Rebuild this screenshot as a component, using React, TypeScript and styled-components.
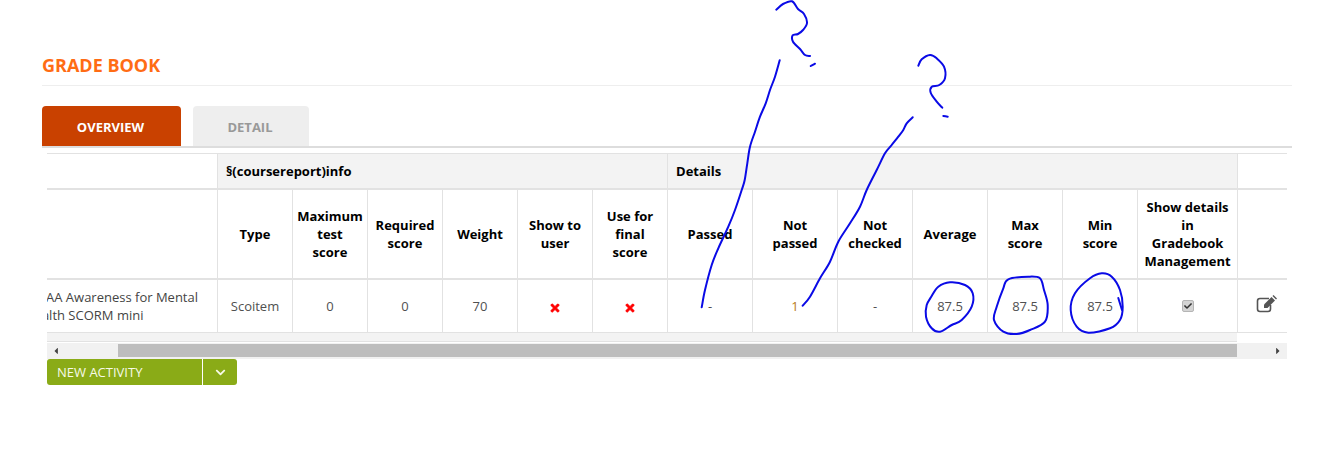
import React from "react";
import styled, { createGlobalStyle } from "styled-components";
import { FaTimes, FaCheck, FaChevronDown, FaCaretLeft, FaCaretRight } from "react-icons/fa";

const Global = createGlobalStyle`
  html, body { margin: 0; padding: 0; background: #fff; }
  body { font-family: "Open Sans", "Liberation Sans", sans-serif; color: #333; }
`;

const Page = styled.div`
  position: relative;
  width: 1317px;
  height: 455px;
  overflow: hidden;
  padding: 55px 25px 0 42px;
  box-sizing: border-box;
`;
const Title = styled.h1`
  margin: 0;
  height: 30px;
  line-height: 21px;
  font-size: 18px;
  font-weight: 700;
  color: #ff6c14;
  border-bottom: 1px solid #eee;
`;
const Tabs = styled.div`
  display: flex;
  gap: 12px;
  margin-top: 20px;
  border-bottom: 2px solid #ddd;
`;
const Tab = styled.div<{ $active?: boolean }>`
  height: 40px;
  line-height: 42px;
  width: ${(p) => (p.$active ? 139 : 116)}px;
  padding-right: 2px;
  box-sizing: border-box;
  text-align: center;
  font-size: 13px;
  font-weight: 700;
  border-radius: 4px 4px 0 0;
  background: ${(p) => (p.$active ? "#c94100" : "#eee")};
  color: ${(p) => (p.$active ? "#fff" : "#999")};
`;
const Scroller = styled.div`
  width: 1240px;
  margin: 5px 0 0 5px;
  overflow: hidden;
`;
const Table = styled.table`
  width: 1240px;
  table-layout: fixed;
  border-collapse: separate;
  border-spacing: 0;
  font-size: 13px;
  line-height: 18px;
`;
const Th = styled.th<{ $band?: boolean; $left?: boolean; $rule?: boolean }>`
  box-sizing: border-box;
  padding: 0;
  font-weight: 700;
  color: #000;
  text-align: ${(p) => (p.$left ? "left" : "center")};
  background: ${(p) => (p.$band ? "#f3f3f3" : "#fff")};
  border-top: 1px solid #e2e2e2;
  border-left: ${(p) => (p.$rule ? "1px solid #e2e2e2" : "0")};
  padding-left: ${(p) => (p.$left ? "8px" : "0")};
  height: 35px;
`;
const HeadCell = styled.th<{ $edge?: boolean }>`
  box-sizing: border-box;
  height: 92px;
  padding: 0;
  font-weight: 700;
  color: #000;
  text-align: center;
  white-space: pre-line;
  border-top: 2px solid #e2e2e2;
  border-bottom: 2px solid #e2e2e2;
  border-left: ${(p) => (p.$edge ? "0" : "1px solid #e2e2e2")};
`;
const Cell = styled.td<{ $edge?: boolean; $tint?: string }>`
  box-sizing: border-box;
  height: 53px;
  padding: 0;
  text-align: center;
  color: ${(p) => p.$tint || "#505050"};
  border-bottom: 1px solid #e2e2e2;
  border-left: ${(p) => (p.$edge ? "0" : "1px solid #e2e2e2")};
`;
const ClippedName = styled.div`
  width: 190px;
  margin-left: -22px;
  text-align: left;
  white-space: nowrap;
  color: #444;
`;
const Footer = styled.div`
  height: 8px;
  width: 1190px;
  background: #f3f3f3;
  border-bottom: 1px solid #e2e2e2;
`;
const ScrollBar = styled.div`
  display: flex;
  align-items: center;
  width: 1240px;
  height: 16px;
  padding: 1px 0 2px;
  box-sizing: border-box;
  margin: 1px 0 0 5px;
  background: #f1f1f1;
  color: #444;
  font-size: 10px;
`;
const Arrow = styled.span`
  width: 71px;
  padding-left: 4px;
  box-sizing: border-box;
  display: flex;
`;
const ArrowEnd = styled.span`
  margin-left: auto;
  width: 50px;
  padding-right: 4px;
  box-sizing: border-box;
  display: flex;
  justify-content: flex-end;
`;
const Thumb = styled.div`
  width: 1119px;
  height: 13px;
  background: #bdbdbd;
`;
const Split = styled.div`
  display: flex;
  width: 190px;
  height: 26px;
  margin-left: 5px;
  background: #8aab17;
  border-radius: 3px;
  color: #f7fae8;
  font-size: 13px;
  line-height: 26px;
`;
const SplitLabel = styled.div`
  width: 156px;
  padding-left: 10px;
  box-sizing: border-box;
  border-right: 1px solid #fff;
`;
const SplitCaret = styled.div`
  flex: 1;
  display: flex;
  align-items: center;
  justify-content: center;
  font-size: 11px;
`;
const Red = styled.span`
  color: #f00;
  font-size: 12px;
  display: inline-flex;
  vertical-align: middle;
  svg { stroke: currentColor; stroke-width: 30px; }
`;
const Box = styled.span`
  display: inline-flex;
  align-items: center;
  justify-content: center;
  width: 12px;
  height: 12px;
  background: #d4d4d4;
  border: 1px solid #b5b5b5;
  border-radius: 2px;
  box-sizing: border-box;
  color: #333;
  font-size: 8px;
  position: relative;
  top: -1px;
`;
const EditGlyph = styled.svg`
  display: block;
  margin: -4px 0 0 18px;
  color: #555;
`;
const Ink = styled.svg`
  position: absolute;
  left: 0;
  top: 0;
  pointer-events: none;
`;
const InkLine = styled.path`
  fill: none;
  stroke: #0a0ae6;
  stroke-width: 2px;
  stroke-linecap: round;
  stroke-linejoin: round;
`;

const widths = [170, 75, 75, 75, 75, 75, 75, 85, 85, 75, 75, 75, 75, 100, 50];
const heads = [
  "Type", "Maximum\ntest\nscore", "Required\nscore", "Weight", "Show to\nuser", "Use for\nfinal\nscore",
  "Passed", "Not\npassed", "Not\nchecked", "Average", "Max\nscore", "Min\nscore", "Show details\nin\nGradebook\nManagement",
];

type Pt = [number, number];
const smooth = (p: Pt[], closed = false): string => {
  const at = (i: number): Pt =>
    closed ? p[(i + p.length) % p.length] : p[Math.max(0, Math.min(p.length - 1, i))];
  let d = `M${p[0][0]} ${p[0][1]}`;
  const n = closed ? p.length : p.length - 1;
  for (let i = 0; i < n; i++) {
    const [a, b, c, e] = [at(i - 1), at(i), at(i + 1), at(i + 2)];
    d += `C${(b[0] + (c[0] - a[0]) / 6).toFixed(1)} ${(b[1] + (c[1] - a[1]) / 6).toFixed(1)} ${(c[0] - (e[0] - b[0]) / 6).toFixed(1)} ${(c[1] - (e[1] - b[1]) / 6).toFixed(1)} ${c[0]} ${c[1]}`;
  }
  return d;
};

const strokes: string[] = [
  smooth([[776.3,9.7],[783,4],[792,1.3],[798,9],[804,14],[807,23],[803,30],[798,34],[792.7,35.3],[793,41.7],[800,49],[805,55],[810,56]]),
  smooth([[810.7,66],[815,63.7]]),
  smooth([[779.7,60.3],[775,76.7],[770,90],[765.7,103.3],[760,116.7],[755,131.7],[750,146.7],[747.3,163.3],[744.7,180],[741.7,190],[735,210],[728.3,226.7],[718.3,248.3],[711.7,265],[705,290],[701.7,307.3]]),
  smooth([[918.3,65.7],[921.7,59.3],[930,55],[936.7,58.3],[944,66.7],[945,78.3],[939.3,85],[931.7,86.7],[930.7,92.7],[936.7,101.7],[942.3,107.7]]),
  smooth([[943.3,116],[947.7,116.7]]),
  smooth([[912.7,117.3],[906.7,123.3],[903.3,130],[898.3,136.7],[891.7,145],[885,153.3],[876.7,170],[866.7,190],[860,206.7],[850,223.3],[838.3,241.7],[830,261.7],[820,278.3],[810,296.7],[802.7,305.7]]),
  smooth([[931.7,296],[938.3,286.7],[950,282.3],[965,285],[972.7,293.3],[971.7,306.7],[961.7,320],[951.7,325],[940,331.7],[931.7,328.3],[926,316.7],[926.7,305]], true),
  smooth([[1003.3,288.3],[1008.3,279.3],[1028.3,276.7],[1040,278.3],[1044,290],[1047.7,305],[1045,321.7],[1030,330],[1016.7,334],[1003.3,331.7],[994,320],[996.7,306.7]], true),
  smooth([[1101.7,273.3],[1111.7,276.7],[1120,290],[1122.7,306.7],[1120,320],[1110,328.3],[1088.3,332.7],[1076.7,326.7],[1070.7,310],[1075,293.3],[1090,278.3]], true),
  smooth([[1118.3,298],[1122,310]]),
];

const Edit = () => (
  <EditGlyph width="22" height="18" viewBox="0 0 22 18">
    <path
      d="M13 3.5H4a2.5 2.5 0 0 0-2.5 2.5v8A2.5 2.5 0 0 0 4 16.5h8a2.5 2.5 0 0 0 2.5-2.5v-4"
      fill="none"
      stroke="currentColor"
      strokeWidth="1.6"
    />
    <path d="M8 9.5 15.5 2l3.5 3.5-7.5 7.5H8z" fill="currentColor" />
    <path d="M16.5 1l1-1 3.5 3.5-1 1z" fill="currentColor" />
  </EditGlyph>
);

export default function App() {
  return (
    <Page>
      <Global />
      <Title>GRADE BOOK</Title>
      <Tabs>
        <Tab $active>OVERVIEW</Tab>
        <Tab>DETAIL</Tab>
      </Tabs>
      <Scroller>
        <Table>
          <colgroup>
            {widths.map((w, i) => (
              <col key={i} style={{ width: w }} />
            ))}
          </colgroup>
          <thead>
            <tr>
              <Th />
              <Th $band $left $rule colSpan={6}>§(coursereport)info</Th>
              <Th $band $left $rule colSpan={7}>Details</Th>
              <Th $rule />
            </tr>
            <tr>
              <HeadCell $edge />
              {heads.map((h) => (
                <HeadCell key={h}>{h}</HeadCell>
              ))}
              <HeadCell />
            </tr>
          </thead>
          <tbody>
            <tr>
              <Cell $edge>
                <ClippedName>
                  HIPAA Awareness for Mental
                  <br />
                  Health SCORM mini
                </ClippedName>
              </Cell>
              <Cell>Scoitem</Cell>
              <Cell>0</Cell>
              <Cell>0</Cell>
              <Cell>70</Cell>
              <Cell><Red><FaTimes /></Red></Cell>
              <Cell><Red><FaTimes /></Red></Cell>
              <Cell>-</Cell>
              <Cell $tint="#b87a14">1</Cell>
              <Cell>-</Cell>
              <Cell>87.5</Cell>
              <Cell>87.5</Cell>
              <Cell>87.5</Cell>
              <Cell><Box><FaCheck /></Box></Cell>
              <Cell><Edit /></Cell>
            </tr>
          </tbody>
        </Table>
        <Footer />
      </Scroller>
      <ScrollBar>
        <Arrow><FaCaretLeft /></Arrow>
        <Thumb />
        <ArrowEnd><FaCaretRight /></ArrowEnd>
      </ScrollBar>
      <Split>
        <SplitLabel>NEW ACTIVITY</SplitLabel>
        <SplitCaret><FaChevronDown /></SplitCaret>
      </Split>
      <Ink width="1317" height="455" viewBox="0 0 1317 455">
        {strokes.map((d, i) => (
          <InkLine key={i} d={d} />
        ))}
      </Ink>
    </Page>
  );
}
